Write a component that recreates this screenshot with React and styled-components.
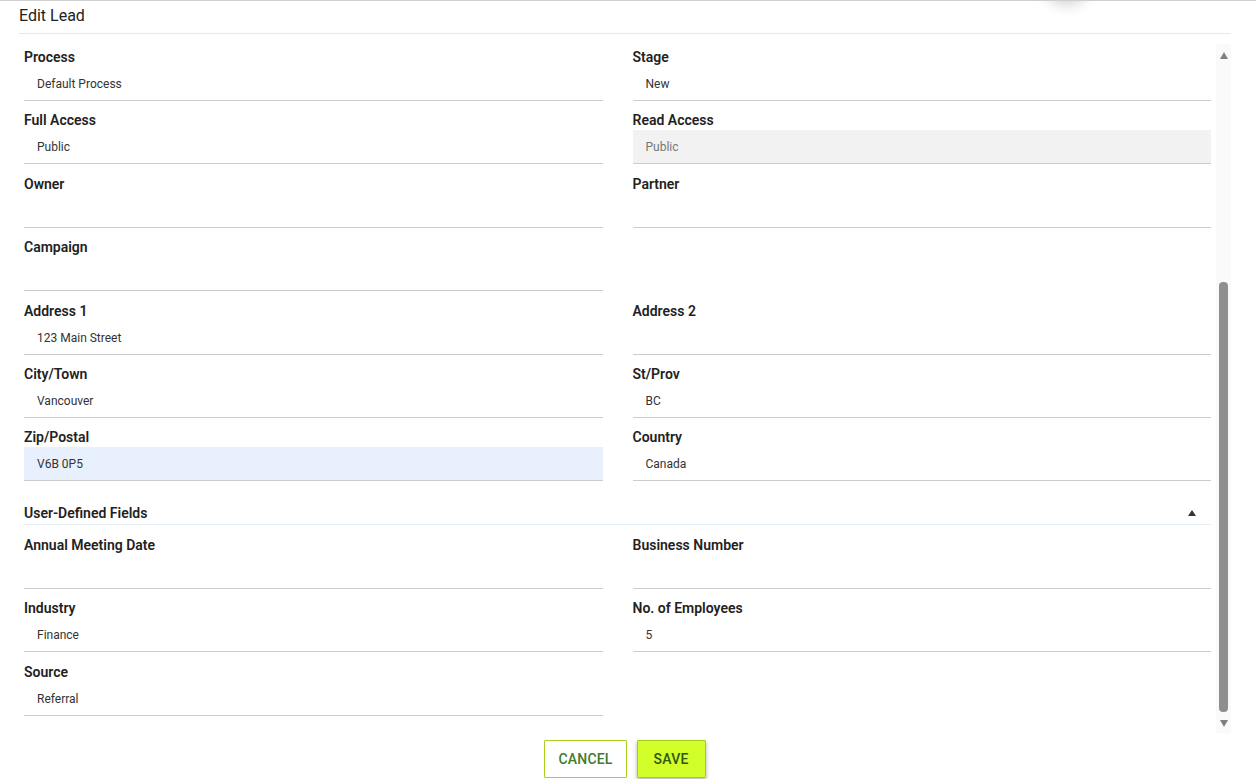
import styled, { createGlobalStyle } from "styled-components";

const GlobalStyle = createGlobalStyle`
  html, body {
    margin: 0;
    padding: 0;
    background: #ffffff;
    font-family: Roboto, "Liberation Sans", Arial, sans-serif;
    color: #222222;
  }
`;

const Dialog = styled.div`
  position: relative;
  height: 779px;
  box-sizing: border-box;
  border-top: 1px solid #cfcfcf;
  padding: 0 25px 0 19px;
  overflow: hidden;
`;

const TopShadow = styled.div`
  position: absolute;
  top: -30px;
  left: 1047px;
  width: 40px;
  height: 30px;
  border-radius: 50%;
  box-shadow: 0 4px 14px rgba(0, 0, 0, 0.18);
`;

const Title = styled.div`
  height: 32px;
  line-height: 29px;
  font-size: 16px;
  color: #222;
  border-bottom: 1px solid #e8e8e8;
`;

const Body = styled.div`
  display: flex;
  margin-top: 10px;
  height: 689px;
`;

const Content = styled.div`
  flex: 1;
  padding: 3px 0 0 5px;
  overflow: hidden;
`;

const Grid = styled.div`
  display: grid;
  grid-template-columns: 1fr 1fr;
  column-gap: 30px;
`;

const Field = styled.div`
  margin-bottom: 9.4px;
`;

const Label = styled.div`
  height: 20px;
  line-height: 20px;
  font-size: 14px;
  font-weight: 600;
  color: #222;
`;

const Input = styled.div`
  height: 33px;
  line-height: 35px;
  padding: 0 13px;
  font-size: 12px;
  overflow: hidden;
  color: ${(p) => (p.$disabled ? "#777" : "#333")};
  background: ${(p) => p.$bg || "transparent"};
  border-bottom: 1px solid #cccccc;
`;

const SectionHeader = styled.div`
  grid-column: 1 / -1;
  display: flex;
  align-items: center;
  justify-content: space-between;
  padding: 12px 15px 1px 0;
  line-height: 20px;
  font-size: 14px;
  font-weight: 600;
  color: #222;
  border-bottom: 1px solid #e6eef5;
  margin-bottom: 10px;
`;

const Caret = styled.span`
  width: 0;
  height: 0;
  border-left: 4px solid transparent;
  border-right: 4px solid transparent;
  border-bottom: 6px solid #333;
`;

const Scrollbar = styled.div`
  width: 15px;
  margin-left: 5px;
  background: #fafafa;
  display: flex;
  flex-direction: column;
  align-items: center;
`;

const ArrowUp = styled.span`
  margin-top: 8px;
  width: 0;
  height: 0;
  border-left: 4.5px solid transparent;
  border-right: 4.5px solid transparent;
  border-bottom: 7px solid #808080;
`;

const ArrowDown = styled.span`
  margin-top: 8px;
  width: 0;
  height: 0;
  border-left: 4.5px solid transparent;
  border-right: 4.5px solid transparent;
  border-top: 7px solid #808080;
`;

const Thumb = styled.div`
  width: 9px;
  margin-top: ${(p) => p.$offset}px;
  height: ${(p) => p.$size}px;
  background: #8f8f8f;
  border-radius: 4px;
`;

const Footer = styled.div`
  display: flex;
  justify-content: center;
  gap: 10px;
  margin-top: 7px;
`;

const Button = styled.button`
  height: 38px;
  padding: 0 ${(p) => (p.$primary ? "16px" : "13px")};
  font-family: Roboto, "Liberation Sans", Arial, sans-serif;
  font-size: 14px;
  font-weight: 500;
  letter-spacing: 0.2px;
  text-transform: uppercase;
  border: 1px solid ${(p) => (p.$primary ? "#a6cc1c" : "#a8d01e")};
  background: ${(p) => (p.$primary ? "#d2ff2a" : "#ffffff")};
  color: ${(p) => (p.$primary ? "#2f5519" : "#3f7a30")};
  box-shadow: ${(p) => (p.$primary ? "0 2px 4px rgba(0,0,0,0.3)" : "none")};
  border-radius: 1px;
  cursor: pointer;
`;

const rows = [
  [{ label: "Process", value: "Default Process" }, { label: "Stage", value: "New" }],
  [{ label: "Full Access", value: "Public" }, { label: "Read Access", value: "Public", disabled: true }],
  [{ label: "Owner", value: "" }, { label: "Partner", value: "" }],
  [{ label: "Campaign", value: "" }, null],
  [{ label: "Address 1", value: "123 Main Street" }, { label: "Address 2", value: "" }],
  [{ label: "City/Town", value: "Vancouver" }, { label: "St/Prov", value: "BC" }],
  [{ label: "Zip/Postal", value: "V6B 0P5", focused: true }, { label: "Country", value: "Canada" }],
];

const udfRows = [
  [{ label: "Annual Meeting Date", value: "" }, { label: "Business Number", value: "" }],
  [{ label: "Industry", value: "Finance" }, { label: "No. of Employees", value: "5" }],
  [{ label: "Source", value: "Referral" }, null],
];

const renderField = (f, key) =>
  f ? (
    <Field key={key}>
      <Label>{f.label}</Label>
      <Input
        $disabled={f.disabled}
        $bg={f.disabled ? "#f2f2f2" : f.focused ? "#e8f0fe" : undefined}
      >
        {f.value}
      </Input>
    </Field>
  ) : (
    <div key={key} />
  );

const App = () => {
  return (
    <>
      <GlobalStyle />
      <Dialog>
        <TopShadow />
        <Title>Edit Lead</Title>
        <Body>
          <Content>
            <Grid>
              {rows.map((r, i) => r.map((f, j) => renderField(f, `a${i}-${j}`)))}
              <SectionHeader>
                User-Defined Fields
                <Caret />
              </SectionHeader>
              {udfRows.map((r, i) => r.map((f, j) => renderField(f, `b${i}-${j}`)))}
            </Grid>
          </Content>
          <Scrollbar>
            <ArrowUp />
            <Thumb $offset={223} $size={430} />
            <ArrowDown />
          </Scrollbar>
        </Body>
        <Footer>
          <Button>Cancel</Button>
          <Button $primary>Save</Button>
        </Footer>
      </Dialog>
    </>
  );
};

export default App;
